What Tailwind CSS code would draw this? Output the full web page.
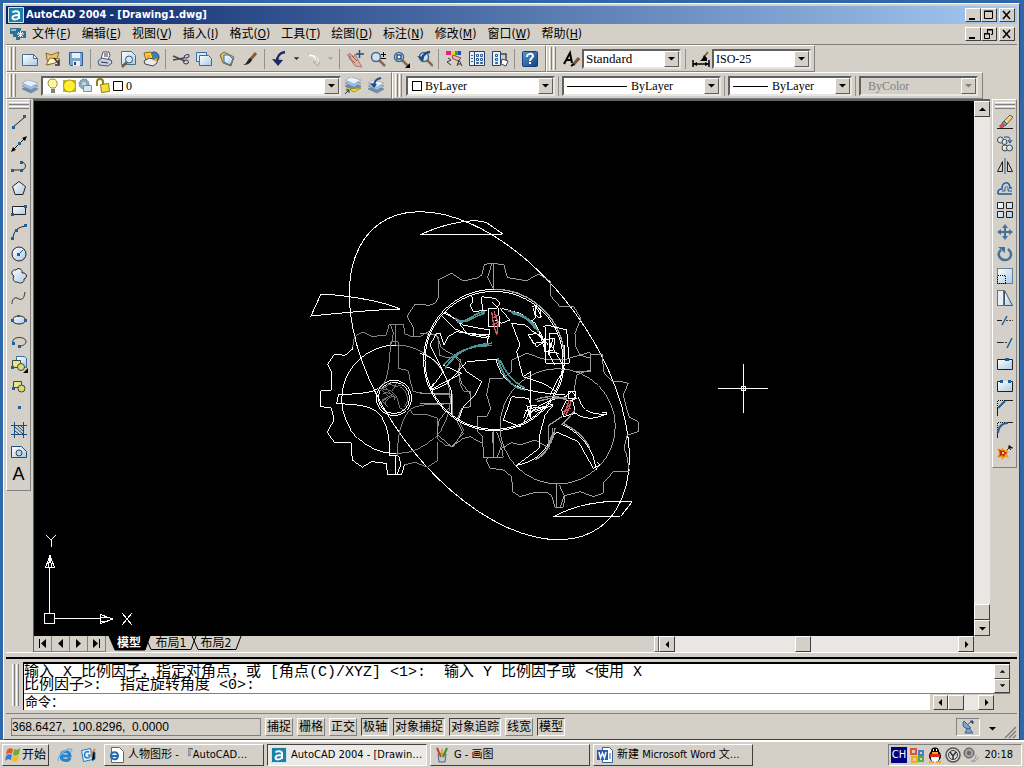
<!DOCTYPE html>
<html lang="zh-CN">
<head>
<meta charset="utf-8">
<title>AutoCAD 2004 - [Drawing1.dwg]</title>
<script src="https://cdn.jsdelivr.net/npm/@tailwindcss/browser@4"></script>
</head>
<body class="h-screen flex flex-col overflow-hidden bg-[#2f67ab] text-black text-[12px] leading-[14px] font-['DejaVu_Sans_Condensed','Noto_Sans_CJK_SC',sans-serif]">

<svg class="absolute size-0" aria-hidden="true">
  <defs>
    <linearGradient id="sheet" x1="0" y1="0" x2="1" y2="1"><stop offset="0" stop-color="#fff"/><stop offset="1" stop-color="#a9c9e6"/></linearGradient>
    <linearGradient id="blue" x1="0" y1="0" x2="1" y2="1"><stop offset="0" stop-color="#5a9ad0"/><stop offset="1" stop-color="#123f7c"/></linearGradient>
    <symbol id="dn" viewBox="0 0 9 9"><path d="M1 3h7L4.500 6.500z"/></symbol>
    <symbol id="up" viewBox="0 0 9 9"><path d="M1 6h7L4.500 2.500z"/></symbol>
    <symbol id="lt" viewBox="0 0 9 9"><path d="M6 1v7L2.500 4.500z"/></symbol>
    <symbol id="rt" viewBox="0 0 9 9"><path d="M3 1v7L6.500 4.500z"/></symbol>
    <symbol id="acad" viewBox="0 0 16 16"><path fill="#1c7fa8" stroke="#cfe6f0" d="M.5.500h15v15H.5z"/><path fill="none" stroke="#fff" stroke-width="2" d="M4.500 5.500C5.500 4 11 3.500 11 6.500V12M11 8C7 8 4.500 8.500 4.500 10.500 4.500 13 9 13 11 10.500"/></symbol>
    <symbol id="layers" viewBox="0 0 18 18"><path fill="#6f8fb4" stroke="#4d6d95" stroke-width=".5" d="M1 12l6-3 10 3-7 4z"/><path fill="#a9c1dc" stroke="#5d7da5" stroke-width=".5" d="M1 9l6-3 10 3-7 4z"/><path fill="#e8f1fa" stroke="#6d8db5" stroke-width=".5" d="M1 6l6-3 10 3-7 4z"/></symbol>
    <symbol id="loupe" viewBox="0 0 18 18"><path stroke="#8a6a4a" stroke-width="2.500" d="M10 10l6 6"/><circle cx="7" cy="7" r="4.500" fill="#cfe2f2" stroke="#4a6484" stroke-width="1.500"/></symbol>
  </defs>
</svg>

<div class="flex-1 min-h-0 flex flex-col mt-[3px] ml-[3px] mr-[4px] bg-[#d4d0c8] border-t border-l border-t-white border-l-white border-r border-r-[#404040] border-b border-b-[#404040] px-[2px] pt-[2px]">

  <!-- Title bar -->
  <header class="h-[18px] shrink-0 flex items-center pl-[2px] pr-[2px] bg-linear-to-r from-[#0a246a] to-[#a6caf0] text-white">
    <svg class="size-4"><use href="#acad"/></svg>
    <h1 class="ml-[2px] flex-1 text-[11px] font-bold">AutoCAD 2004 - [Drawing1.dwg]</h1>
    <div class="flex">
      <button aria-label="最小化" class="w-4 h-[14px] grid place-items-center bg-[#d4d0c8] border border-t-white border-l-white border-r-[#404040] border-b-[#404040]"><svg class="size-[10px]" viewBox="0 0 10 10"><path d="M1 8h6v2H1z"/></svg></button>
      <button aria-label="最大化" class="w-4 h-[14px] grid place-items-center bg-[#d4d0c8] border border-t-white border-l-white border-r-[#404040] border-b-[#404040]"><svg class="size-[10px]" viewBox="0 0 10 10"><path fill="none" stroke="#000" d="M.5 1.500h8v7h-8zM0 1h9"/></svg></button>
      <button aria-label="关闭" class="ml-[2px] w-4 h-[14px] grid place-items-center bg-[#d4d0c8] border border-t-white border-l-white border-r-[#404040] border-b-[#404040]"><svg class="size-[10px]" viewBox="0 0 10 10"><path stroke="#000" stroke-width="1.500" d="M1 1l7 8M8 1L1 9"/></svg></button>
    </div>
  </header>

  <!-- Menu bar -->
  <nav class="h-[21px] shrink-0 flex items-center pl-1 pr-[2px] border-b border-[#808080]">
    <svg class="size-4 mr-[6px]" viewBox="0 0 16 16"><path fill="#2b7194" d="M0 2h11v3h5v7h-6v2H6v-3H3V8H0z"/><path stroke="#fff" fill="none" d="M1 4h5M7 8h7M10.500 5v6M8 6l5 5M13 6l-5 5"/></svg>
    <div class="flex-1 flex gap-[11px]">
      <button class="whitespace-nowrap">文件(<u>F</u>)</button><button class="whitespace-nowrap">编辑(<u>E</u>)</button><button class="whitespace-nowrap">视图(<u>V</u>)</button><button class="whitespace-nowrap">插入(<u>I</u>)</button><button class="whitespace-nowrap">格式(<u>O</u>)</button><button class="whitespace-nowrap">工具(<u>T</u>)</button><button class="whitespace-nowrap">绘图(<u>D</u>)</button><button class="whitespace-nowrap">标注(<u>N</u>)</button><button class="whitespace-nowrap">修改(<u>M</u>)</button><button class="whitespace-nowrap">窗口(<u>W</u>)</button><button class="whitespace-nowrap">帮助(<u>H</u>)</button>
    </div>
    <div class="flex">
      <button aria-label="最小化文档" class="w-4 h-[14px] grid place-items-center border border-t-white border-l-white border-r-[#404040] border-b-[#404040]"><svg class="size-[10px]" viewBox="0 0 10 10"><path d="M1 8h6v2H1z"/></svg></button>
      <button aria-label="还原文档" class="w-4 h-[14px] grid place-items-center border border-t-white border-l-white border-r-[#404040] border-b-[#404040]"><svg class="size-[10px]" viewBox="0 0 10 10"><path fill="none" stroke="#000" d="M3.500 4V.5h5v5H7M3 1h6M.5 4.500h5v5h-5zM0 5h6"/></svg></button>
      <button aria-label="关闭文档" class="ml-[2px] w-4 h-[14px] grid place-items-center border border-t-white border-l-white border-r-[#404040] border-b-[#404040]"><svg class="size-[10px]" viewBox="0 0 10 10"><path stroke="#000" stroke-width="1.500" d="M1 1l7 8M8 1L1 9"/></svg></button>
    </div>
  </nav>

  <!-- Standard and Styles toolbars -->
  <div class="h-[27px] shrink-0 flex">
    <div class="flex items-center border-t border-l border-white border-r border-r-[#808080] border-b border-b-[#808080]">
      <i class="ml-[2px] mr-[2px] w-[7px] h-[23px] bg-[linear-gradient(90deg,#fff_1px,#d4d0c8_1px,#d4d0c8_2px,#808080_2px,#808080_3px,#d4d0c8_3px)] bg-[size:4px_4px]"></i>
      <button aria-label="新建" class="w-[23px] h-[22px] grid place-items-center"><svg class="size-[18px]" viewBox="0 0 18 18"><path fill="url(#sheet)" stroke="#4a6c92" d="M1.500 4.500h11l4 4v7h-15z"/><path fill="#fff" stroke="#4a6c92" d="M12.500 4.500v4h4z"/></svg></button>
      <button aria-label="打开" class="w-[23px] h-[22px] grid place-items-center"><svg class="size-[18px]" viewBox="0 0 18 18"><path fill="#e8c66e" stroke="#8a6a28" d="M2 3l5 2 8-3-3 10-8 3z"/><path fill="#fff4c8" stroke="#8a6a28" d="M2 15L6 8l10 1-5 4z"/><path fill="none" stroke="#333" stroke-width="1.500" d="M10 8l5 6m0-4v5h-4"/></svg></button>
      <button aria-label="保存" class="w-[23px] h-[22px] grid place-items-center"><svg class="size-[18px]" viewBox="0 0 18 18"><path fill="#7da6d0" stroke="#2e5c94" d="M2.500 2.500h13v13h-12l-1-1z"/><path fill="#e8f0f8" d="M5 3h8v5H5zM6 11h7v5H6z"/><path fill="#1e4a80" d="M7 12h2v3H7z"/></svg></button>
      <i class="ml-[3px] mr-[2px] w-px h-5 bg-[#909090]"></i>
      <button aria-label="打印" class="w-[23px] h-[22px] grid place-items-center"><svg class="size-[18px]" viewBox="0 0 18 18"><path fill="#fff" stroke="#556" d="M5 9L7 2h6l1 3-2 5z"/><path fill="#c8d0e4" stroke="#4c5878" d="M2 11l4-3 9 2 1 3-4 3-9-1z"/><path stroke="#334" d="M5 12l7 1M8 4h4M8 6h4"/></svg></button>
      <button aria-label="打印预览" class="w-[23px] h-[22px] grid place-items-center"><svg class="size-[18px]" viewBox="0 0 18 18"><path fill="url(#sheet)" stroke="#4a6c92" d="M2.500 1.500h10l4 4v9h-14z"/><path stroke="#7a5a40" stroke-width="2.500" d="M8 12l-5 5"/><circle cx="10" cy="9.500" r="3.500" fill="#d8e8f5" stroke="#3a5474"/></svg></button>
      <button aria-label="发布" class="w-[23px] h-[22px] grid place-items-center"><svg class="size-[18px]" viewBox="0 0 18 18"><circle cx="12" cy="7" r="5" fill="#3b83c0" stroke="#24527c"/><path fill="#f7cf40" stroke="#8a6a10" d="M2 3l7-1 2 6-7 2z"/><path fill="#e8eaf0" stroke="#445" d="M2 11l5-3 8 2v3l-4 3-8-2z"/><path fill="#f7a820" d="M5 5h3v3H5zM11 10l4-2v4z"/></svg></button>
      <i class="mx-[3px] w-px h-5 bg-[#909090]"></i>
      <button aria-label="剪切" class="w-[23px] h-[22px] grid place-items-center"><svg class="size-[18px]" viewBox="0 0 18 18" fill="none"><path stroke="#445" stroke-width="1.500" d="M1 6l12 5M1 10l11-2"/><ellipse cx="14.500" cy="6.500" rx="2.500" ry="1.500" stroke="#36305c" transform="rotate(-20 14 6)"/><ellipse cx="14" cy="12" rx="2.500" ry="2" stroke="#36305c"/></svg></button>
      <button aria-label="复制" class="w-[23px] h-[22px] grid place-items-center"><svg class="size-[18px]" viewBox="0 0 18 18"><path fill="#d8e8f5" stroke="#3a6c9c" d="M1.500 2.500h10v9h-10z"/><path fill="url(#sheet)" stroke="#3a6c9c" d="M4.500 5.500h9l3 3v7h-12z"/></svg></button>
      <button aria-label="粘贴" class="w-[23px] h-[22px] grid place-items-center"><svg class="size-[18px]" viewBox="0 0 18 18"><path fill="#d8c070" stroke="#80682c" d="M2 5l4-3 10 5-3 9-8-3z"/><path fill="url(#sheet)" stroke="#3a6c9c" d="M6 5h5l4 4-3 6-6-3z"/></svg></button>
      <button aria-label="特性匹配" class="w-[23px] h-[22px] grid place-items-center"><svg class="size-[18px]" viewBox="0 0 18 18"><path stroke="#8a5a30" stroke-width="3" d="M15 3l-6 7"/><path fill="#2a2420" d="M9 8l2 2c-2 4-5 5-9 5 4-1 4-5 7-7z"/></svg></button>
      <i class="mx-[3px] w-px h-5 bg-[#909090]"></i>
      <button aria-label="放弃" class="w-[23px] h-[22px] grid place-items-center"><svg class="size-[18px]" viewBox="0 0 18 18"><path fill="none" stroke="#1b2c60" stroke-width="2.500" d="M14 2C8 3 6 6 6 12"/><path fill="#1b2c60" d="M1 9l11 1-5 6z"/></svg></button>
      <button aria-label="放弃列表" class="w-[11px] h-[22px] grid place-items-center"><svg class="size-[7px]" fill="#1b2c60"><use href="#dn"/></svg></button>
      <button aria-label="重做" class="w-[23px] h-[22px] grid place-items-center"><svg class="size-[18px]" viewBox="0 0 18 18"><path fill="none" stroke="#fff" stroke-width="3" d="M4 5c5-1 8 2 9 8"/><path fill="none" stroke="#b0aca4" d="M3 4c6-1 9 2 9 7M8 12h7l-2 4z"/></svg></button>
      <button aria-label="重做列表" class="w-[11px] h-[22px] grid place-items-center"><svg class="size-[7px]" fill="#aaa69e"><use href="#dn"/></svg></button>
      <i class="mx-[3px] w-px h-5 bg-[#909090]"></i>
      <button aria-label="实时平移" class="w-[23px] h-[22px] grid place-items-center"><svg class="size-[18px]" viewBox="0 0 18 18"><path fill="#e2b0a0" stroke="#b07a70" d="M1 4l4 4-2-5 5 4 1-3 3 6 4 7-7-1z"/><path stroke="#965a50" d="M3 8l6 5M6 6l5 5"/><path stroke="#204a80" stroke-width="1.500" d="M13.500 0v8M10 4h8"/></svg></button>
      <button aria-label="实时缩放" class="w-[23px] h-[22px] grid place-items-center"><svg class="size-[18px]" viewBox="0 0 18 18"><use href="#loupe"/><path stroke="#000" d="M12 4.500h5M14.500 2v5M12 8.500h5"/></svg></button>
      <button aria-label="窗口缩放" class="w-[23px] h-[22px] grid place-items-center"><svg class="size-[18px]" viewBox="0 0 18 18"><use href="#loupe"/><path fill="#fff" stroke="#225a90" stroke-width="1.500" d="M5 5h4v4H5z"/><path d="M18 13v5h-5z"/></svg></button>
      <button aria-label="缩放上一个" class="w-[23px] h-[22px] grid place-items-center"><svg class="size-[18px]" viewBox="0 0 18 18"><use href="#loupe" x="2"/><path fill="#1c4c80" d="M2 6l7 1-1 5z"/><path fill="none" stroke="#1c4c80" stroke-width="2.500" d="M15 2c-4 0-6 2-8 6"/></svg></button>
      <i class="mx-[3px] w-px h-5 bg-[#909090]"></i>
      <button aria-label="特性" class="w-[23px] h-[22px] grid place-items-center"><svg class="size-[18px]" viewBox="0 0 18 18"><path fill="#e0218a" d="M1 1h5v4H1z"/><path fill="#f5d020" d="M6 1h4v4H6z"/><path fill="#30a050" d="M10 1h3v4h-3z"/><path fill="#2050c0" d="M13 1h3v4h-3z"/><path fill="#e8b8a8" stroke="#8a4a44" d="M8 5l8 3-3 3-6-3z"/><path fill="none" stroke="#334" d="M3 8l3 2-4 2 4 3M12 16l2-6 3 6M12 14h4"/></svg></button>
      <button aria-label="设计中心" class="w-[23px] h-[22px] grid place-items-center"><svg class="size-[18px]" viewBox="0 0 18 18"><path fill="#e8f0f8" stroke="#1e4470" d="M1.500 1.500h15v14h-15zM6.500 2v14"/><path fill="none" stroke="#2a5c98" d="M8.500 4.500h2v2h-2zM12.500 4.500h2v2h-2zM8.500 8.500h2v2h-2zM12.500 8.500h2v2h-2zM8.500 12.500h2v1h-2zM12.500 12.500h2v1h-2zM3 5.500h2M3 8.500h2M3 11.500h2"/></svg></button>
      <button aria-label="工具选项板" class="w-[23px] h-[22px] grid place-items-center"><svg class="size-[18px]" viewBox="0 0 18 18"><path fill="#e8f0f8" stroke="#1e4470" d="M1.500 1.500h8v14h-8z"/><path fill="none" stroke="#2a5c98" d="M4.500 4.500h2v2h-2zM4.500 8.500h2v2h-2zM4.500 12.500h2v1h-2z"/><path fill="none" stroke="#445" stroke-width="1.500" d="M9 4h6v6"/><path fill="#fff" stroke="#445" d="M11 9l6 2-2 5-5-2z"/></svg></button>
      <i class="mx-[3px] w-px h-5 bg-[#909090]"></i>
      <button aria-label="帮助" class="w-[23px] h-[22px] grid place-items-center"><svg class="size-4" viewBox="0 0 16 16"><rect x=".5" y=".5" width="15" height="15" rx="1" fill="url(#blue)" stroke="#123f7c"/><path fill="none" stroke="#fff" stroke-width="2" d="M5 6c0-4 6-4 6-1 0 2-3 2-3 5M8 11v2"/></svg></button>
      <i class="w-1"></i>
    </div>
    <div class="flex items-center border-t border-l border-white border-r border-r-[#808080] border-b border-b-[#808080]">
      <i class="ml-[2px] mr-[3px] w-[7px] h-[23px] bg-[linear-gradient(90deg,#fff_1px,#d4d0c8_1px,#d4d0c8_2px,#808080_2px,#808080_3px,#d4d0c8_3px)] bg-[size:4px_4px]"></i>
      <button aria-label="文字样式" class="w-[23px] h-[22px] grid place-items-center"><svg class="size-[18px]" viewBox="0 0 18 18"><path fill="none" stroke="#000" stroke-width="2" d="M2 14L8 3l2 10M5 10h5"/><path stroke="#7a5236" stroke-width="3" d="M17 8l-6 7"/><path stroke="#000" stroke-width="2" d="M12 14l-3 2"/></svg></button>
      <label class="relative flex"><select aria-label="文字样式列表" class="appearance-none w-[99px] h-5 pl-[2px] bg-white border-2 border-t-[#606060] border-l-[#606060] border-r-[#e8e5df] border-b-[#e8e5df] font-['Liberation_Serif',serif] text-[13px] leading-4"><option>Standard</option></select><span class="absolute right-[2px] top-[2px] bottom-[2px] w-[15px] grid place-items-center pointer-events-none bg-[#d4d0c8] border border-t-white border-l-white border-r-[#606060] border-b-[#606060]"><svg class="size-[9px]"><use href="#dn"/></svg></span></label>
      <i class="mx-1 w-px h-5 bg-[#909090]"></i>
      <button aria-label="标注样式" class="w-[22px] h-[22px] grid place-items-center"><svg class="size-[18px]" viewBox="0 0 18 18"><path stroke="#000" stroke-width="1.500" d="M1 10v7M17 10v7M1 14h16"/><path d="M1 14l4-2v4zM17 14l-4-2v4z"/><path stroke="#8a5a30" stroke-width="2" d="M16 2l-4 5"/><path d="M12 5l3 3v3H8c2-2 3-3 4-6z"/></svg></button>
      <label class="relative flex"><select aria-label="标注样式列表" class="appearance-none w-[99px] h-5 pl-[2px] bg-white border-2 border-t-[#606060] border-l-[#606060] border-r-[#e8e5df] border-b-[#e8e5df] font-['Liberation_Serif',serif] text-[12px] leading-4"><option>ISO-25</option></select><span class="absolute right-[2px] top-[2px] bottom-[2px] w-[15px] grid place-items-center pointer-events-none bg-[#d4d0c8] border border-t-white border-l-white border-r-[#606060] border-b-[#606060]"><svg class="size-[9px]"><use href="#dn"/></svg></span></label>
      <i class="w-[3px]"></i>
    </div>
  </div>

  <!-- Layers and Properties toolbars -->
  <div class="h-[27px] shrink-0 flex">
    <div class="flex items-center border-t border-l border-white border-r border-r-[#808080] border-b border-b-[#808080]">
      <i class="ml-[2px] mr-[2px] w-[7px] h-[23px] bg-[linear-gradient(90deg,#fff_1px,#d4d0c8_1px,#d4d0c8_2px,#808080_2px,#808080_3px,#d4d0c8_3px)] bg-[size:4px_4px]"></i>
      <button aria-label="图层特性管理器" class="w-[23px] h-[22px] grid place-items-center"><svg class="size-[18px]"><use href="#layers"/></svg></button>
      <label class="relative flex"><select aria-label="图层" class="appearance-none w-[300px] h-5 pl-[83px] bg-white border-2 border-t-[#606060] border-l-[#606060] border-r-[#e8e5df] border-b-[#e8e5df] font-['Liberation_Serif',serif] text-[12px] leading-4"><option>0</option></select>
        <svg class="absolute left-[5px] top-[2px] w-[78px] h-4 pointer-events-none" viewBox="0 0 78 16"><path fill="#fff8a8" stroke="#a08820" d="M5 10C0 6 2 1 6.500 1S13 6 9 10z"/><path stroke="#555" stroke-width="1.500" d="M5 12h4M5 14h4"/><path fill="#c8b030" d="M17 2h4v4h-4zM26 2h4v4h-4zM17 10h4v4h-4zM26 10h4v4h-4z"/><circle cx="23.500" cy="8" r="6" fill="#fff22c" stroke="#a09018"/><circle cx="38" cy="6" r="5" fill="#8fa9b8" stroke="#708898" stroke-dasharray="2 1"/><circle cx="38" cy="6" r="2" fill="#c8dae4"/><path fill="#d8e4ee" stroke="#7890a4" d="M37.500 7.500h8v6h-8z"/><path fill="none" stroke="#8f8010" stroke-width="2" d="M51 8V4c0-4 6-4 6 0v4"/><path fill="#f2e040" stroke="#8f8010" d="M54.500 6.500l8-1 1 8-8 1z"/><path fill="#fff" stroke="#000" d="M67.500 3.500h9v9h-9z"/></svg>
        <span class="absolute right-[2px] top-[2px] bottom-[2px] w-[15px] grid place-items-center pointer-events-none bg-[#d4d0c8] border border-t-white border-l-white border-r-[#606060] border-b-[#606060]"><svg class="size-[9px]"><use href="#dn"/></svg></span></label>
      <button aria-label="将对象的图层置为当前" class="w-[23px] h-[22px] grid place-items-center"><svg class="size-[18px]" viewBox="0 0 18 18"><path fill="#f2dc20" stroke="#8a7a10" stroke-width=".5" d="M2 11l6-3 9 3-7 4z"/><use href="#layers" y="-3"/><path fill="#f2dc20" stroke="#8a7a10" stroke-width=".5" d="M6 12l11-1-7 4z"/><path fill="none" stroke="#1b2c60" d="M1 17l4-4M2 13h3v3"/></svg></button>
      <button aria-label="上一个图层" class="w-[23px] h-[22px] grid place-items-center"><svg class="size-[18px]" viewBox="0 0 18 18"><use href="#layers"/><path fill="none" stroke="#1f4c84" stroke-width="2" d="M14 1C9 2 8 4 7 8"/><path fill="#1f4c84" d="M3 6l7 1-3 4z"/></svg></button>
      <i class="w-[4px]"></i>
    </div>
    <div class="flex items-center border-t border-l border-white border-r border-r-[#808080] border-b border-b-[#808080]">
      <i class="ml-[2px] mr-1 w-[7px] h-[23px] bg-[linear-gradient(90deg,#fff_1px,#d4d0c8_1px,#d4d0c8_2px,#808080_2px,#808080_3px,#d4d0c8_3px)] bg-[size:4px_4px]"></i>
      <label class="relative flex"><select aria-label="颜色" class="appearance-none w-[149px] h-5 pl-[17px] bg-white border-2 border-t-[#606060] border-l-[#606060] border-r-[#e8e5df] border-b-[#e8e5df] font-['Liberation_Serif',serif] text-[12px] leading-4"><option>ByLayer</option></select><i class="absolute left-[6px] top-[5px] size-[10px] border border-black pointer-events-none"></i><span class="absolute right-[2px] top-[2px] bottom-[2px] w-[15px] grid place-items-center pointer-events-none bg-[#d4d0c8] border border-t-white border-l-white border-r-[#606060] border-b-[#606060]"><svg class="size-[9px]"><use href="#dn"/></svg></span></label>
      <i class="mx-[3px] w-px h-5 bg-[#909090]"></i>
      <label class="relative flex"><select aria-label="线型" class="appearance-none w-[159px] h-5 pl-[67px] bg-white border-2 border-t-[#606060] border-l-[#606060] border-r-[#e8e5df] border-b-[#e8e5df] font-['Liberation_Serif',serif] text-[12px] leading-4"><option>ByLayer</option></select><i class="absolute left-[5px] top-[10px] w-[60px] h-px bg-black pointer-events-none"></i><span class="absolute right-[2px] top-[2px] bottom-[2px] w-[15px] grid place-items-center pointer-events-none bg-[#d4d0c8] border border-t-white border-l-white border-r-[#606060] border-b-[#606060]"><svg class="size-[9px]"><use href="#dn"/></svg></span></label>
      <i class="mx-[3px] w-px h-5 bg-[#909090]"></i>
      <label class="relative flex"><select aria-label="线宽" class="appearance-none w-[124px] h-5 pl-[42px] bg-white border-2 border-t-[#606060] border-l-[#606060] border-r-[#e8e5df] border-b-[#e8e5df] font-['Liberation_Serif',serif] text-[12px] leading-4"><option>ByLayer</option></select><i class="absolute left-[5px] top-[10px] w-[35px] h-px bg-black pointer-events-none"></i><span class="absolute right-[2px] top-[2px] bottom-[2px] w-[15px] grid place-items-center pointer-events-none bg-[#d4d0c8] border border-t-white border-l-white border-r-[#606060] border-b-[#606060]"><svg class="size-[9px]"><use href="#dn"/></svg></span></label>
      <i class="mx-[3px] w-px h-5 bg-[#909090]"></i>
      <label class="relative flex"><select aria-label="打印样式" disabled class="appearance-none w-[119px] h-5 pl-[7px] bg-[#d4d0c8] text-[#808080] opacity-100 border-2 border-t-[#606060] border-l-[#606060] border-r-[#e8e5df] border-b-[#e8e5df] font-['Liberation_Serif',serif] text-[12px] leading-4"><option>ByColor</option></select><span class="absolute right-[2px] top-[2px] bottom-[2px] w-[15px] grid place-items-center pointer-events-none bg-[#d4d0c8] border border-t-white border-l-white border-r-[#606060] border-b-[#606060]"><svg class="size-[9px]" fill="#808080"><use href="#dn"/></svg></span></label>
      <i class="w-1"></i>
    </div>
  </div>

  <!-- Work area -->
  <main class="flex-1 min-h-0 flex">
    <aside class="w-[25px] shrink-0">
      <div class="flex flex-col items-center pb-[4px] border-t border-l border-white border-r border-r-[#808080] border-b border-b-[#808080]">
        <i class="mt-[2px] mb-[2px] w-5 h-[7px] bg-[linear-gradient(180deg,#fff_1px,#d4d0c8_1px,#d4d0c8_2px,#808080_2px,#808080_3px,#d4d0c8_3px)] bg-[size:4px_4px]"></i>
        <button aria-label="直线" class="size-[22px] grid place-items-center"><svg class="size-4" viewBox="0 0 16 16"><path stroke="#222" d="M2 13L14 3"/><path fill="#1f6098" d="M1 12h3v3H1zM12 1h3v3h-3z"/></svg></button>
        <button aria-label="构造线" class="size-[22px] grid place-items-center"><svg class="size-4" viewBox="0 0 16 16"><path stroke="#000" d="M1 15L15 1"/><path d="M0 16l2-5 3 3zM16 0l-5 2 3 3z"/><path fill="#1f6098" d="M7 6h3v3H7z"/></svg></button>
        <button aria-label="多段线" class="size-[22px] grid place-items-center"><svg class="size-4" viewBox="0 0 16 16"><path fill="none" stroke="#333" d="M1 12h9c6 0 6-8 0-8"/><path fill="#1f6098" d="M0 11h3v3H0zM9 11h3v3H9zM9 3h3v3H9z"/></svg></button>
        <button aria-label="正多边形" class="size-[22px] grid place-items-center"><svg class="size-4" viewBox="0 0 16 16"><path fill="url(#sheet)" stroke="#222" d="M8 1.500l6.500 5-2.500 8H4l-2.500-8z"/></svg></button>
        <button aria-label="矩形" class="size-[22px] grid place-items-center"><svg class="size-4" viewBox="0 0 16 16"><path fill="url(#sheet)" stroke="#222" d="M1.500 4.500h13v8h-13z"/><path fill="#1f6098" d="M0 11h3v3H0zM13 3h3v3h-3z"/></svg></button>
        <button aria-label="圆弧" class="size-[22px] grid place-items-center"><svg class="size-4" viewBox="0 0 16 16"><path fill="none" stroke="#222" d="M2 15C2 8 6 3 15 2"/><path fill="#1f6098" d="M0 13h3v3H0zM4 5h3v3H4zM13 0h3v3h-3z"/></svg></button>
        <button aria-label="圆" class="size-[22px] grid place-items-center"><svg class="size-4" viewBox="0 0 16 16"><circle cx="8" cy="8" r="7" fill="url(#sheet)" stroke="#222"/><path stroke="#1f6098" d="M8 8l4-4"/><path fill="#1f6098" d="M6 7h3v3H6z"/></svg></button>
        <button aria-label="修订云线" class="size-[22px] grid place-items-center"><svg class="size-4" viewBox="0 0 16 16"><path fill="url(#sheet)" stroke="#222" d="M3 8C-1 6 1 1 5 2c2-3 7-1 6 3 5-1 6 5 2 6 1 4-5 5-6 3-4 1-6-3-4-6z"/></svg></button>
        <button aria-label="样条曲线" class="size-[22px] grid place-items-center"><svg class="size-4" viewBox="0 0 16 16"><path fill="none" stroke="#333" d="M1 14c0-4 2-7 5-6 5 3 7 1 8-6"/></svg></button>
        <button aria-label="椭圆" class="size-[22px] grid place-items-center"><svg class="size-4" viewBox="0 0 16 16"><ellipse cx="8" cy="8" rx="6.500" ry="4" fill="url(#sheet)" stroke="#222"/><path fill="#1f6098" d="M0 7h3v3H0zM13 7h3v3h-3zM6 3h3v2H6z"/></svg></button>
        <button aria-label="椭圆弧" class="size-[22px] grid place-items-center"><svg class="size-4" viewBox="0 0 16 16"><path fill="none" stroke="#333" d="M2 9C0 2 14 2 15 7c0 4-4 5-7 5"/><path fill="#1f6098" d="M1 8h3v3H1zM7 11h3v3H7z"/></svg></button>
        <button aria-label="插入块" class="size-[22px] grid place-items-center"><svg class="size-[18px]" viewBox="0 0 18 18"><path fill="url(#sheet)" stroke="#3a6c9c" d="M6.500 1.500h8l2 2v9h-10z"/><path fill="#e4e68a" stroke="#444" d="M2.500 5.500h8v7h-8z"/><circle cx="11" cy="12" r="3.500" fill="#d8dc70" stroke="#444"/><path fill="#1f6098" d="M1 11h3v3H1z"/><path d="M18 13v5h-5z"/></svg></button>
        <button aria-label="创建块" class="size-[22px] grid place-items-center"><svg class="size-4" viewBox="0 0 16 16"><path fill="#e4e68a" stroke="#444" d="M2.500 3.500h8v6h-8z"/><circle cx="10.500" cy="10.500" r="3.500" fill="#d8dc70" stroke="#444"/><path fill="#1f6098" d="M1 9h3v3H1z"/></svg></button>
        <button aria-label="点" class="size-[22px] grid place-items-center"><svg class="size-4" viewBox="0 0 16 16"><path fill="#1f6098" d="M7 6h3v3H7z"/></svg></button>
        <button aria-label="图案填充" class="size-[22px] grid place-items-center"><svg class="size-4" viewBox="0 0 16 16"><path fill="#dfeaf5" stroke="#174d80" d="M3.500 0v16M12.500 0v16M0 3.500h16M0 12.500h16"/><path stroke="#174d80" d="M4 5l8 7M4 9l4 3M7 4l5 5M10 4l3 3"/></svg></button>
        <button aria-label="面域" class="size-[22px] grid place-items-center"><svg class="size-4" viewBox="0 0 16 16"><path fill="url(#sheet)" stroke="#1f4c80" d="M.5 2.500h10l5 5v6H.5z"/><circle cx="8" cy="9" r="3" fill="#d4d0c8" stroke="#1f4c80"/></svg></button>
        <button aria-label="多行文字" class="size-[22px] grid place-items-center font-['Liberation_Sans',sans-serif] text-[18px]">A</button>
        <i class="h-px"></i>
      </div>
    </aside>

    <section class="flex-1 min-w-0 flex flex-col ml-[2px] border-l border-t-2 border-[#606060]">
      <div class="flex-1 min-h-0 flex">
        <div class="flex-1 min-w-0 bg-black">
          <svg class="size-full block" viewBox="34 101 940 535" fill="none" stroke="#fff" stroke-width="1" shape-rendering="crispEdges">
            <ellipse cx="489.300" cy="375.700" rx="187.600" ry="106.300" transform="rotate(53.900 489.300 375.700)"/>
            <!-- fins and crosshair -->
            <path d="M420 235C440 225 473 217 487 223L503 234ZM321 294C342 295 380 300 400 309 367 310 332 314 311 316ZM553 517C580 502 607 500 632 502L621 516Z"/>
            <path d="M718 388.500H768M743.500 364V413M741.500 386.500h4v4h-4z"/>
            <!-- left wheel -->
            <g transform="translate(300 200) scale(.3333)" stroke-width="3">
              <path d="M158 440V447L135 466 103 463 83 493 94 515V570L83 573H62V620L94 623 102 660 82 697 103 727H153L157 780 187 802 215 785 258 790 263 824H305L313 795"/>
              <path stroke="#858585" d="M158 440L163 410 190 396 215 410 258 405 268 373H310L315 402 335 410H360L385 395 415 412 418 465 440 473 465 470 485 490 475 510 480 550 490 573 512 575V620L485 625 475 655 490 690 470 725 460 740 435 735 412 715 414 655 384 645H340L330 630M414 725V780L383 802 345 787 313 795"/>
              <path d="M288 435A163 163 0 0 0 288 761"/><path stroke="#858585" d="M288 435A163 163 0 0 1 288 761"/>
              <circle cx="282" cy="594" r="53"/><circle cx="282" cy="594" r="47"/>
              <path d="M235 565C220 577 180 583 116 583L110 612C200 610 240 630 252 665 270 700 268 740 268 768H292M286 768V824M296 768L303 795 290 824"/>
              <path stroke="#858585" d="M272 425H295V505L325 512 330 540 340 575C380 583 420 583 458 583V650M455 612C400 612 350 612 330 630 300 660 292 720 292 768M272 425C268 500 262 550 240 565M286 375V435M272 376L280 400 275 432"/>
              <path stroke="#707070" d="M236 575L255 560 275 585 245 600 262 620M290 550L275 575 290 590 300 625 318 632M245 570L265 590 240 612M275 548L250 565M300 560C330 580 325 610 312 620M262 550L290 560 310 552M240 565L272 572M250 580C270 575 285 585 285 600M255 612C262 590 275 588 290 592"/>
            </g>
            <g transform="translate(420 255) scale(.3333)" stroke-width="3">
              <!-- middle wheel -->
              <path stroke="#9a9a9a" d="M-20 245L-18 220-39 185-15 147 28 151M193 28L185 60 175 68 130 78 95 55 57 73V125L45 145 28 151M193 28L220 25 252 30 262 68 320 77 355 57 393 80 390 120 420 155 460 153 483 190 465 235 467 275 480 300 510 292 512 345 480 355 470 360 462 410M172 485V530L188 545 190 607H250L245 580 275 563 300 570 345 555 390 580M188 565L150 545 130 550 95 575 52 540 55 500 85 460M122 315L115 350 125 385 150 415 152 455 125 460 110 495 130 535 95 575M172 485H200L212 460 200 420 210 370 245 372 275 350V315L320 295 370 312M222 25V103M215 28L203 66 220 100M222 528V607M216 530L222 600M230 530L245 570 232 607M0 415H88L92 445H0M0 235L50 240 65 280 100 300 122 315"/>
              <ellipse cx="222" cy="315" rx="211" ry="212"/><ellipse cx="222" cy="316" rx="207" ry="207"/>
              <path stroke="#aaa" stroke-width="4" d="M222 103A211 212 0 0 1 433 315"/>
              <!-- right wheel -->
              <circle stroke="#a0a0a0" cx="413" cy="514" r="173"/>
              <path stroke="#a0a0a0" d="M512 300H548L550 350 575 378 605 380 625 385 610 420 620 460 628 487 655 500V530L622 540 612 580 620 600 628 648 580 650 550 685V715L520 725 480 710 435 722 430 757H405L395 722 380 712 345 712 300 725 278 710 275 665 250 645 210 640 198 615 205 605M410 688V757M418 690L433 722 420 757M512 310L480 300 430 315 370 312M465 350H512"/>
              <!-- first runner -->
              <path d="M65 172L90 182 130 210 180 220 210 225M75 170L110 195 140 235 210 240M60 178L105 222 150 240 205 250M155 120L158 140 150 152 160 170 200 165M187 165L185 125 225 130 240 145 230 160 205 160V215H240L235 160 215 140M240 160L270 195 245 205 225 195M245 160L300 175 345 205 370 250M335 155L350 150 363 170 360 190 345 180 340 160M348 150V185L335 200M365 185L345 150M275 205L300 270 290 290 302 340 310 365 333 350V490M275 205L315 210 340 230 365 245M325 240L350 235 375 260 340 265 325 240 350 275 375 260 360 240 385 270M370 215L380 210 440 225 448 325H378V215M375 250V290L400 285 405 250 365 255M390 265L430 332M375 290L418 295M355 225L375 285M400 250L385 295 405 330M410 235H390V300M435 270V330M72 270L60 235 50 235 30 270 70 350 30 405 125 355 68 330M30 405L40 385M72 270L85 245 110 230 210 245M210 225L200 270M30 405C80 400 105 360 140 320L228 313 235 335C260 400 320 410 435 420M0 295C60 310 75 360 95 410V480M125 330L140 350 185 380 165 420 130 455 115 495M435 340L410 380 390 420M310 365L370 385 410 410"/>
              <path stroke="#4f9296" stroke-width="5" d="M105 190C140 215 160 170 195 170M110 200C150 205 165 180 195 175M265 168C320 180 340 200 355 230M275 175C310 180 335 200 345 222M75 340C110 290 150 270 215 265M70 330C110 285 160 270 215 272M233 310C250 370 280 400 315 405M240 315C260 360 280 380 315 400"/>
              <path stroke="#c85c60" stroke-width="4" d="M215 170L220 205 230 240M222 170L235 205 230 240M215 190L235 180M218 210L236 200"/>
              <!-- second runner -->
              <path d="M250 495L275 425 325 430 335 455 320 490 300 515ZM315 475L330 460 375 455 345 465 320 480M310 490L325 455 350 450M320 450L330 485M315 465L340 470M445 410H467V432H445ZM435 425L455 410 468 425 450 440 470 430M425 465L440 435 460 440 465 475 430 485ZM475 425C485 460 500 475 545 478L560 480M462 470C480 490 520 500 562 474L545 472M400 450L375 480 358 545V580L288 632 300 645M290 632L300 625M295 630C340 620 370 600 400 540L412 532 475 560 520 640 540 630 530 620M430 510C470 530 500 560 518 600L530 645M345 470L400 450 385 445M320 480C340 465 380 430 440 425"/>
              <path stroke="#999" stroke-width="4" d="M345 435C380 420 410 425 440 430M350 440C390 428 420 425 440 435M430 505C465 525 490 540 510 580M398 520C400 560 380 600 345 615M405 520C400 560 380 590 350 612M385 512V570L400 530M465 465L445 490 425 510M425 485L385 512"/>
              <path stroke="#c85c60" stroke-width="4" d="M447 435L440 460 430 480M453 438L448 460 438 480M440 445L450 460 430 470"/>
            </g>
            <!-- UCS icon -->
            <path d="M44.500 613.500h10v10h-10zM49.500 613V568M45.500 567.500h9l-4.500-12zM48 567l2-9 2 9M55 618.500h45M100.500 614.500v9l12-4.500zM101 617h7M101 621h7M46 535l5 5 5-5M51.500 540v7M122 613l10 12M132 613l-10 12"/>
          </svg>
        </div>
        <div class="w-4 shrink-0 flex flex-col bg-[#e9e7e3]">
          <button aria-label="向上滚动" class="h-4 grid place-items-center bg-[#d4d0c8] border border-t-white border-l-white border-r-[#404040] border-b-[#404040]"><svg class="size-[9px]"><use href="#up"/></svg></button>
          <span class="flex-1"></span>
          <span class="h-4 bg-[#d4d0c8] border border-t-white border-l-white border-r-[#404040] border-b-[#404040]"></span>
          <button aria-label="向下滚动" class="h-4 grid place-items-center bg-[#d4d0c8] border border-t-white border-l-white border-r-[#404040] border-b-[#404040]"><svg class="size-[9px]"><use href="#dn"/></svg></button>
        </div>
      </div>
      <div class="h-4 shrink-0 flex">
        <button aria-label="第一个" class="w-[18px] grid place-items-center border-r border-b border-[#808080]"><svg class="size-[9px]" viewBox="0 0 9 9"><path d="M1 0h1v9H1zM8 0v9L3 4.500z"/></svg></button>
        <button aria-label="上一个" class="w-[18px] grid place-items-center border-r border-b border-[#808080]"><svg class="size-[9px]" viewBox="0 0 9 9"><path d="M7 0v9L2 4.500z"/></svg></button>
        <button aria-label="下一个" class="w-[18px] grid place-items-center border-r border-b border-[#808080]"><svg class="size-[9px]" viewBox="0 0 9 9"><path d="M2 0v9l5-4.500z"/></svg></button>
        <button aria-label="最后一个" class="w-[18px] grid place-items-center border-r border-b border-[#808080]"><svg class="size-[9px]" viewBox="0 0 9 9"><path d="M1 0v9l5-4.500zM7 0h1v9H7z"/></svg></button>
        <div class="relative ml-[2px] w-[134px]">
          <svg class="absolute inset-0 size-full" viewBox="0 0 134 16"><path stroke="#000" d="M1 0l6 14h30l5-14z"/><path fill="none" stroke="#000" d="M37 0l6 13.500h40l5-13.500M84 0l6 13.500h38l5-13.500"/></svg>
          <div class="relative flex h-[14px] leading-[13px]"><button class="w-[42px] text-center font-bold text-white">模型</button><button class="w-[42px] text-center whitespace-nowrap">布局1</button><button class="w-[48px] text-center whitespace-nowrap">布局2</button></div>
        </div>
        <span class="flex-1"></span>
        <div class="w-[320px] flex">
          <span class="w-[5px] border border-t-white border-l-white border-r-[#606060] border-b-[#606060]"></span>
          <button aria-label="向左滚动" class="w-4 grid place-items-center border border-t-white border-l-white border-r-[#404040] border-b-[#404040]"><svg class="size-[9px]"><use href="#lt"/></svg></button>
          <span class="w-[120px] bg-[#e9e7e3]"></span>
          <span class="w-4 border border-t-white border-l-white border-r-[#404040] border-b-[#404040]"></span>
          <span class="flex-1 bg-[#e9e7e3]"></span>
          <button aria-label="向右滚动" class="w-4 grid place-items-center border border-t-white border-l-white border-r-[#404040] border-b-[#404040]"><svg class="size-[9px]"><use href="#rt"/></svg></button>
        </div>
        <span class="w-4"></span>
      </div>
    </section>

    <aside class="w-[25px] ml-[2px] shrink-0">
      <div class="flex flex-col items-center pb-[4px] border-t border-l border-white border-r border-r-[#808080] border-b border-b-[#808080]">
        <i class="mt-[2px] mb-[2px] w-5 h-[7px] bg-[linear-gradient(180deg,#fff_1px,#d4d0c8_1px,#d4d0c8_2px,#808080_2px,#808080_3px,#d4d0c8_3px)] bg-[size:4px_4px]"></i>
        <button aria-label="删除" class="size-[22px] grid place-items-center"><svg class="size-4" viewBox="0 0 16 16"><path stroke="#222" d="M0 14.500h16"/><path fill="#e8d488" stroke="#6a6030" d="M7 7l6-6 3 2-6 7z"/><path fill="#6c9aca" stroke="#456" d="M5 9l2-2 3 3-2 2z"/><path fill="#d05050" d="M2 12l3-3 3 3-2 2H3z"/></svg></button>
        <button aria-label="复制对象" class="size-[22px] grid place-items-center"><svg class="size-4" viewBox="0 0 16 16" fill="url(#sheet)" stroke="#444"><circle cx="3.500" cy="4" r="3"/><circle cx="7.500" cy="6" r="2.500"/><circle cx="8" cy="12" r="3"/><circle cx="12.500" cy="12" r="3"/><path fill="none" stroke="#1f4c80" d="M7 1h4c2 0 2 2 2 5m-2-2l2 3 2-3"/></svg></button>
        <button aria-label="镜像" class="size-[22px] grid place-items-center"><svg class="size-4" viewBox="0 0 16 16"><path fill="none" stroke="#222" d="M.5 13.500h5v-10zM15.500 13.500h-5v-10z"/><path stroke="#1f5c98" d="M8 0v16"/></svg></button>
        <button aria-label="偏移" class="size-[22px] grid place-items-center"><svg class="size-4" viewBox="0 0 16 16" fill="none" stroke="#1f5c98"><path stroke-width="1.500" d="M1 14h14M1 14c-1-5 3-5 4-5 0-8 8-8 8-1h2"/><path d="M5 11h3c-1-6 4-6 3 0h4"/></svg></button>
        <button aria-label="阵列" class="size-[22px] grid place-items-center"><svg class="size-4" viewBox="0 0 16 16" fill="url(#sheet)" stroke="#222"><path d="M.5.500h6v6h-6zM9.500.500h6v6h-6zM.5 9.500h6v6h-6zM9.500 9.500h6v6h-6z"/></svg></button>
        <button aria-label="移动" class="size-[22px] grid place-items-center"><svg class="size-4" viewBox="0 0 16 16"><path fill="#47719c" d="M8 0l3 4H9v3h3V5l4 3-4 3V9H9v3h2l-3 4-3-4h2V9H4v2L0 8l4-3v2h3V4H5z"/></svg></button>
        <button aria-label="旋转" class="size-[22px] grid place-items-center"><svg class="size-4" viewBox="0 0 16 16"><path fill="none" stroke="#47719c" stroke-width="2.500" d="M11 3c6 5 2 11-3 11S-1 8 4 4"/><path fill="#47719c" d="M1 1h7v6z"/></svg></button>
        <button aria-label="缩放" class="size-[22px] grid place-items-center"><svg class="size-4" viewBox="0 0 16 16" shape-rendering="crispEdges"><path fill="url(#sheet)" stroke="#66809c" d="M.5.500h15v15H.5z"/><path fill="none" stroke="#000" stroke-dasharray="1 1" d="M.5 7.500h8v8h-8z"/></svg></button>
        <button aria-label="拉伸" class="size-[22px] grid place-items-center"><svg class="size-4" viewBox="0 0 16 16"><path fill="#e8f0f8" stroke="#000" stroke-dasharray="1 1" d="M.5.500h6v15h-6z"/><path fill="url(#sheet)" stroke="#456" d="M7.500.500v15h8z"/></svg></button>
        <button aria-label="修剪" class="size-[22px] grid place-items-center"><svg class="size-4" viewBox="0 0 16 16"><path stroke="#222" d="M0 8.500h5"/><path stroke="#444" stroke-dasharray="2 1" d="M9 8.500h7"/><path stroke="#1f6098" stroke-width="1.500" d="M5 13l5-9"/></svg></button>
        <button aria-label="延伸" class="size-[22px] grid place-items-center"><svg class="size-4" viewBox="0 0 16 16"><path stroke="#222" d="M0 8.500h5"/><path stroke="#444" stroke-dasharray="2 1" d="M5 8.500h6"/><path stroke="#1f6098" stroke-width="1.500" d="M10 14l5-10"/></svg></button>
        <button aria-label="打断于点" class="size-[22px] grid place-items-center"><svg class="size-4" viewBox="0 0 16 16"><path fill="url(#sheet)" stroke="#222" d="M.5 3.500h15v10H.5z"/><path fill="#1f6098" d="M8 2h4v3H8z"/></svg></button>
        <button aria-label="打断" class="size-[22px] grid place-items-center"><svg class="size-4" viewBox="0 0 16 16"><path fill="url(#sheet)" d="M0 3h16v11H0z"/><path fill="none" stroke="#222" d="M3 3.500H.5v10h15v-10H13"/><path fill="#1f6098" d="M3 2h3v3H3zM11 2h3v3h-3z"/></svg></button>
        <button aria-label="倒角" class="size-[22px] grid place-items-center"><svg class="size-4" viewBox="0 0 16 16" fill="none"><path stroke="#000" stroke-dasharray="1 1" d="M.5 8V.5H8"/><path stroke="#222" d="M.5 8v8M8 .5h8"/><path stroke="#1f5c98" stroke-width="2" d="M1 8l7-7"/></svg></button>
        <button aria-label="圆角" class="size-[22px] grid place-items-center"><svg class="size-4" viewBox="0 0 16 16" fill="none"><path stroke="#000" stroke-dasharray="1 1" d="M.5 8V.5H8"/><path stroke="#222" d="M.5 10v6M10 .5h6"/><path stroke="#1f5c98" stroke-width="2" d="M1 11c0-6 4-10 10-10"/></svg></button>
        <button aria-label="分解" class="size-[22px] grid place-items-center"><svg class="size-4" viewBox="0 0 16 16"><path stroke="#333" d="M9 7l3-3M12 1v3h4M11 3l3 3"/><path fill="#f0a020" d="M0 4l4 2 1-3 2 3 4 0-1 4 2 4-4-1-3 3-1-3-4 1 2-5z"/><path fill="#c02818" d="M2 5l3 2 2-1 1 2 3 1-3 1-1 3-2-2-3 2 1-3z"/><path fill="#ffe060" d="M5 8h2v2H5z"/></svg></button>
      </div>
    </aside>
  </main>

  <!-- Command window -->
  <div class="h-[5px] shrink-0 border-t border-white"></div>
  <section class="h-[56px] shrink-0 flex border-t-2 border-black pt-[3px] pb-[3px] pl-[6px] pr-[7px]">
    <i class="mr-1 mt-[2px] mb-1 w-[7px] bg-[linear-gradient(90deg,#fff_1px,#d4d0c8_1px,#d4d0c8_2px,#808080_2px,#808080_3px,#d4d0c8_3px)] bg-[size:4px_4px]"></i>
    <div class="flex-1 min-w-0 flex flex-col border-l border-t-2 border-black font-['Liberation_Mono','Noto_Sans_CJK_SC',monospace] text-[15px] leading-[13px]">
      <div class="flex-1 min-h-0 flex bg-white border-b border-[#808080]">
        <pre class="flex-1 min-w-0 pt-[2px] overflow-hidden font-['Liberation_Mono','Noto_Sans_CJK_SC',monospace]">输入 X 比例因子，指定对角点，或 [角点(C)/XYZ] &lt;1&gt;:  输入 Y 比例因子或 &lt;使用 X
比例因子&gt;:  指定旋转角度 &lt;0&gt;:</pre>
        <div class="w-4 flex flex-col bg-[#d4d0c8]">
          <button aria-label="历史上滚" class="flex-1 grid place-items-center border border-t-white border-l-white border-r-[#404040] border-b-[#404040]"><svg class="size-[7px]"><use href="#up"/></svg></button>
          <button aria-label="历史下滚" class="flex-1 grid place-items-center border border-t-white border-l-white border-r-[#404040] border-b-[#404040]"><svg class="size-[7px]"><use href="#dn"/></svg></button>
        </div>
      </div>
      <div class="h-4 shrink-0 flex items-center">
        <label for="cmd" class="h-full pl-px pt-[2px] bg-white whitespace-nowrap text-[13px]">命令：</label><input id="cmd" class="flex-1 min-w-0 h-full bg-white outline-none">
        <div class="ml-[3px] mr-4 h-[15px] w-[61px] flex bg-[#e9e7e3]">
          <button aria-label="命令左滚" class="w-[15px] grid place-items-center bg-[#d4d0c8] border border-t-white border-l-white border-r-[#404040] border-b-[#404040]"><svg class="size-[9px]"><use href="#lt"/></svg></button>
          <span class="w-4 bg-[#d4d0c8] border border-t-white border-l-white border-r-[#404040] border-b-[#404040]"></span><span class="flex-1"></span>
          <button aria-label="命令右滚" class="w-4 grid place-items-center bg-[#d4d0c8] border border-t-white border-l-white border-r-[#404040] border-b-[#404040]"><svg class="size-[9px]"><use href="#rt"/></svg></button>
        </div>
      </div>
    </div>
  </section>

  <!-- Status bar -->
  <footer class="h-[26px] shrink-0 flex items-center gap-1 pl-[5px] border-t border-[#808080]">
    <output class="w-[250px] h-[18px] leading-4 font-['Liberation_Sans',sans-serif] border border-[#808080]">368.6427,&nbsp; 100.8296,&nbsp; 0.0000</output>
    <div class="flex items-center gap-1 whitespace-nowrap">
      <button class="h-[18px] w-7 border border-t-white border-l-white border-r-[#808080] border-b-[#808080]">捕捉</button>
      <button class="h-[18px] w-7 border border-t-white border-l-white border-r-[#808080] border-b-[#808080]">栅格</button>
      <button class="h-[18px] w-7 border border-t-white border-l-white border-r-[#808080] border-b-[#808080]">正交</button>
      <button aria-pressed="true" class="h-[18px] w-7 border border-t-[#404040] border-l-[#404040] border-r-white border-b-white">极轴</button>
      <button aria-pressed="true" class="h-[18px] w-[52px] border border-t-[#404040] border-l-[#404040] border-r-white border-b-white">对象捕捉</button>
      <button aria-pressed="true" class="h-[18px] w-[52px] border border-t-[#404040] border-l-[#404040] border-r-white border-b-white">对象追踪</button>
      <button class="h-[18px] w-7 border border-t-white border-l-white border-r-[#808080] border-b-[#808080]">线宽</button>
      <button aria-pressed="true" class="h-[18px] w-7 border border-t-[#404040] border-l-[#404040] border-r-white border-b-white">模型</button>
    </div>
    <span class="flex-1"></span>
    <button aria-label="通讯中心" class="w-6 h-[18px] grid place-items-center border border-t-[#808080] border-l-[#808080] border-r-white border-b-white"><svg class="size-[14px]" viewBox="0 0 14 14"><path fill="#7fa5d0" stroke="#3a5c90" d="M3 1c-3 5 1 9 7 7zM6 9l-2 4h8L8 8"/><path stroke="#3a5c90" d="M6 5l5-4M9 1h3v3"/></svg></button>
    <button aria-label="状态栏菜单" class="w-4 h-4 grid place-items-center pt-1"><svg class="size-[9px]"><use href="#dn"/></svg></button>
    <svg class="size-[13px] self-end" viewBox="0 0 13 13"><path stroke="#808080" stroke-width="1.500" d="M1 12L12 1M5 12l7-7M9 12l3-3"/></svg>
  </footer>
</div>

<!-- Taskbar -->
<footer class="h-[28px] shrink-0 flex items-center bg-[#d4d0c8] border-t-2 border-white pl-[2px] pr-[2px]">
  <button class="w-[47px] h-[22px] flex items-center gap-px pl-[2px] whitespace-nowrap border border-t-white border-l-white border-r-[#404040] border-b-[#404040]"><svg class="size-4" viewBox="0 0 16 16"><path fill="#e05a28" d="M2 3c2-2 4-2 6-1L7 7C5 6 3 6 1 8z"/><path fill="#6cac34" d="M9 2c2 1 4 1 6-1l-1 6c-2 2-4 2-6 1z"/><path fill="#3a78c8" d="M1 9c2-2 4-2 6-1l-1 5c-2-1-4-1-6 1z"/><path fill="#f2bc20" d="M8 9c2 1 4 1 6-1l-1 5c-2 2-4 2-6 1z"/></svg>开始</button>
  <button aria-label="Internet Explorer" class="ml-2 size-4"><svg class="size-4" viewBox="0 0 16 16" fill="none"><path stroke="#2583cc" stroke-width="3" d="M13 11c-2 4-9 3-9-2 0-6 9-6 9 0H5"/><path stroke="#75b8e8" stroke-width="1.500" d="M2 14C-1 11 8 1 14 2c1 0 1 2 0 3"/></svg></button>
  <button aria-label="显示桌面" class="ml-[7px] size-4"><svg class="size-4" viewBox="0 0 16 16"><path fill="#dcefff" stroke="#2a78c0" d="M1.500 3.500l9-2 2 11-9 2z"/><path fill="none" stroke="#2a78c0" stroke-width="1.500" d="M9 5c-5-2-6 5-2 6 3 0 4-3 1-3"/><path stroke="#e0802c" stroke-width="1.500" d="M15 2l-5 7"/><path stroke="#2a78c0" d="M13 5h2v7l-3 2"/></svg></button>
  <div class="flex-1 flex gap-[3px] ml-2 min-w-0 text-[11px]">
    <button class="w-[160px] h-[22px] flex items-center gap-1 px-[3px] whitespace-nowrap border border-t-white border-l-white border-r-[#404040] border-b-[#404040]"><svg class="size-4 shrink-0" viewBox="0 0 16 16"><path fill="#fff" stroke="#666" d="M3.500.500h8l4 4v11h-12z"/><path fill="none" stroke="#2468b8" stroke-width="2" d="M10 10c-2 4-7 2-7-1 0-5 7-5 7 0H4"/></svg>人物图形 - 『AutoCAD…</button>
    <button aria-pressed="true" class="w-[160px] h-[22px] flex items-center gap-1 px-[3px] whitespace-nowrap bg-[#eceae6] border border-t-[#404040] border-l-[#404040] border-r-white border-b-white"><svg class="size-4 shrink-0"><use href="#acad"/></svg>AutoCAD 2004 - [Drawin…</button>
    <button class="w-[160px] h-[22px] flex items-center gap-1 px-[3px] whitespace-nowrap border border-t-white border-l-white border-r-[#404040] border-b-[#404040]"><svg class="size-4 shrink-0" viewBox="0 0 16 16"><path fill="#b8cce0" stroke="#567" d="M4 7h8l-1 8H5z"/><path stroke="#b84a28" stroke-width="2" d="M3 1l4 9"/><path stroke="#e0a820" stroke-width="2" d="M8 2v8"/><path stroke="#3a8a40" stroke-width="2" d="M13 1L9 10"/></svg>G - 画图</button>
    <button class="w-[160px] h-[22px] flex items-center gap-1 px-[3px] whitespace-nowrap border border-t-white border-l-white border-r-[#404040] border-b-[#404040]"><svg class="size-4 shrink-0" viewBox="0 0 16 16"><path fill="#fff" stroke="#3460a0" d="M5.500.500h7l3 3v12h-10z"/><path fill="#2c5ca8" d="M0 3h11v10H0z"/><path fill="none" stroke="#fff" stroke-width="1.500" d="M2 5l1.500 6 2-5 2 5L9 5"/><path stroke="#3460a0" d="M12 7h2M12 9h2M12 11h2"/></svg>新建 Microsoft Word 文…</button>
  </div>
  <div class="w-[134px] h-[22px] flex items-center gap-[2px] pl-[2px] border border-t-[#808080] border-l-[#808080] border-r-white border-b-white">
    <span class="size-4 shrink-0 bg-[#000080] text-white text-center leading-4 text-[11px]">CH</span>
    <svg class="size-4" viewBox="0 0 16 16" fill="none" stroke-width="2"><path stroke="#e0562c" d="M2 2h5v5H2z"/><path stroke="#3e82c8" d="M10 4h4v4h-4z"/><path stroke="#eab020" d="M3 10h5v5H3z"/><path stroke="#60a848" d="M10 10h4v4h-4z"/></svg>
    <svg class="size-4" viewBox="0 0 16 16"><ellipse cx="8" cy="9" rx="6" ry="6"/><circle cx="8" cy="4.500" r="4"/><ellipse cx="8" cy="11" rx="4" ry="4" fill="#fff"/><path fill="#e02820" d="M3 7h10v3H3z"/><path fill="#f2a820" d="M5 5h6v2H5zM2 14h5v2H2zM9 14h5v2H9z"/><path fill="#fff" d="M6 2h1v2H6zM9 2h1v2H9z"/></svg>
    <svg class="size-4" viewBox="0 0 16 16"><circle cx="8" cy="8" r="7" fill="#ddd" stroke="#555" stroke-width="1.500"/><circle cx="8" cy="8" r="4.500" fill="none" stroke="#333"/><path fill="none" stroke="#333" stroke-width="1.500" d="M5 5l3 4 3-4M8 9v3"/></svg>
    <svg class="size-4" viewBox="0 0 16 16"><circle cx="6" cy="6" r="5" fill="#a0a0a0" stroke="#555"/><circle cx="6" cy="6" r="2" fill="#666"/><path fill="none" stroke="#8090b8" d="M8 14c3 0 5-3 5-6M10 15c3-1 5-3 5-5"/></svg>
    <time class="flex-1 pr-2 text-right text-[11px]">20:18</time>
  </div>
</footer>
</body>
</html>
